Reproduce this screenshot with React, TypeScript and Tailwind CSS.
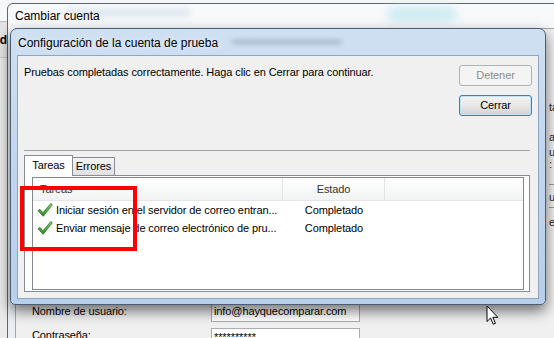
import React from "react";

function CheckIcon() {
  return (
    <svg width="16" height="16" viewBox="0 0 16 16" className="shrink-0">
      <defs>
        <linearGradient id="chk" x1="0" y1="0" x2="0" y2="1">
          <stop offset="0" stopColor="#86e060" />
          <stop offset="1" stopColor="#1f8a17" />
        </linearGradient>
      </defs>
      <path
        d="M1 8.8 L2.9 7.3 L6 10.7 L13.8 1.6 L15.3 2.8 L6.2 14.3 Z"
        fill="url(#chk)"
        stroke="#1b5e12"
        strokeWidth="0.7"
        strokeLinejoin="round"
      />
    </svg>
  );
}

function Cursor() {
  return (
    <svg width="13" height="21" viewBox="0 0 13 21">
      <path
        d="M1 1 V16.5 L4.6 13 L7.2 19.2 L9.4 18.3 L6.9 12.3 H11.8 Z"
        fill="#fff"
        stroke="#000"
        strokeWidth="1"
      />
    </svg>
  );
}

const tasks = [
  { name: "Iniciar sesión en el servidor de correo entran...", state: "Completado" },
  { name: "Enviar mensaje de correo electrónico de pru...", state: "Completado" },
];

export default function App() {
  return (
    <div className="relative h-[338px] w-[554px] overflow-hidden bg-[#f4f5f6] font-['Liberation_Sans',Arial,sans-serif] text-[11px] tracking-[-0.1px] text-black">
      {/* window behind, far left */}
      <div className="absolute left-0 top-0 flex h-full w-[7px] flex-col overflow-hidden">
        <div className="h-[22px] border-b border-[#b9bcc0] bg-[#f7f8f9]" />
        <div className="flex h-[36px] items-center justify-end border-b border-[#c8c8c8] bg-[#e4e4e4]">
          <span className="text-[12px] font-bold">d</span>
        </div>
        <div className="flex-1 bg-[#ebebeb]" />
      </div>

      {/* parent window: Cambiar cuenta */}
      <div className="absolute left-[7px] top-[3px] flex h-[360px] w-[580px] flex-col rounded-t-[6px] border border-[#5b6774] bg-gradient-to-b from-[#f7f9fb] to-[#eaeef2] pl-[7px]">
        <div className="relative flex h-[24px] items-center">
          <span className="relative z-10 text-[12px] tracking-normal">Cambiar cuenta</span>
          <div className="absolute left-[50px] top-[5px] h-[7px] w-[125px] rounded-full bg-[#9fb6cf] opacity-30 blur-[3px]" />
          <div className="absolute left-[372px] top-[3px] h-[15px] w-[70px] rounded-full bg-[#bfe6f0] opacity-70 blur-[4px]" />
        </div>
        <div className="flex flex-1 border-l border-t border-[#a7a7a7] bg-[#f0f0f0]">
          <div className="flex w-[532px] shrink-0 flex-col gap-[6px] pl-[16px] pt-[272px]">
            <div className="flex h-[21px] items-center">
              <span className="w-[179px]">Nombre de usuario:</span>
              <div className="flex h-[21px] w-[149px] items-center border border-[#abadb3] bg-white pl-[2px]">
                info@hayquecomparar.com
              </div>
            </div>
            <div className="flex h-[21px] items-start">
              <span className="w-[179px] leading-[14px]">Contraseña:</span>
              <div className="h-[21px] w-[149px] border border-[#abadb3] bg-white pl-[2px] pt-[2px] leading-[12px]">
                **********
              </div>
            </div>
          </div>
          <div className="flex flex-col whitespace-nowrap pl-[1px] pt-[72px] leading-[12px] text-[#222]">
            <span>ta</span>
            <span className="mt-[18px]">ac</span>
            <span className="mt-[3px]">u</span>
            <span>: n</span>
            <span className="mt-[14px] h-px w-[10px] bg-[#9a9a9a]" />
            <span className="mt-[6px]">u</span>
            <span className="mt-[4px] h-px w-[10px] bg-[#9a9a9a]" />
            <span className="mt-[8px]">e</span>
          </div>
        </div>
      </div>

      {/* dialog: Configuración de la cuenta de prueba */}
      <div className="absolute left-[10px] top-[28px] flex h-[277px] w-[536px] flex-col rounded-t-[7px] rounded-b-[5px] border border-[#4a5d73] bg-gradient-to-b from-[#cfe0f2] via-[#c0d6ed] to-[#b6cfea] px-[6px] pb-[5px] shadow-[0_6px_14px_rgba(0,0,0,0.55)]">
        <div className="relative flex h-[26px] items-center pl-[1px] pt-[1px]">
          <span className="relative z-10 text-[12px] tracking-normal text-shadow-[0_0_6px_rgba(255,255,255,0.9)]">
            Configuración de la cuenta de prueba
          </span>
          <div className="absolute left-[215px] top-[10px] h-[6px] w-[110px] rounded-full bg-[#5a6a7e] opacity-25 blur-[2px]" />
        </div>
        <div className="flex flex-1 flex-col border border-[#8fa6c0] bg-[#f0f0f0] px-[6px] pb-[6px] pt-[9px]">
          <div className="flex items-start justify-between">
            <p className="leading-[14px]">
              Pruebas completadas correctamente. Haga clic en Cerrar para continuar.
            </p>
            <div className="flex flex-col gap-[9px]">
              <button className="h-[21px] w-[73px] rounded-[3px] border border-[#adb2b5] bg-[#f4f4f4] text-[11px] text-[#8d8d8d]">
                Detener
              </button>
              <button className="h-[21px] w-[73px] rounded-[3px] border border-[#3c7fb1] bg-gradient-to-b from-[#f3f3f3] via-[#e8e8e8] to-[#d2d2d2] text-[11px] shadow-[inset_0_0_0_1px_#bfe3f8]">
                Cerrar
              </button>
            </div>
          </div>

          <div className="mr-[2px] mt-[34px] h-px bg-[#a3a3a3]" />

          <div className="mr-[2px] mt-[4px] flex flex-1 flex-col">
            <div className="flex h-[20px] items-end">
              <div className="relative z-10 -mb-px flex h-[21px] w-[49px] items-center justify-center border border-b-0 border-[#898c95] bg-white pb-[1px]">
                Tareas
              </div>
              <div className="-ml-px flex h-[18px] w-[43px] items-center justify-center border border-b-0 border-[#898c95] bg-gradient-to-b from-[#f3f3f3] to-[#e1e1e1]">
                Errores
              </div>
            </div>
            <div className="flex flex-1 border border-[#898c95] bg-white py-[1px] pl-[7px] pr-[5px]">
              <div className="flex flex-1 flex-col border border-[#828790] bg-white">
                <div className="flex h-[23px] border-b border-[#e5e5e5] bg-gradient-to-b from-white to-[#f2f3f4] text-[#333]">
                  <div className="flex w-[250px] items-center border-r border-[#e3e3e3] pl-[7px]">Tareas</div>
                  <div className="flex w-[102px] items-center justify-center border-r border-[#e3e3e3]">Estado</div>
                  <div className="flex-1" />
                </div>
                {tasks.map((t) => (
                  <div key={t.name} className="flex h-[18px] items-center">
                    <div className="flex w-[250px] items-center gap-[3px] whitespace-nowrap pl-[4px]">
                      <CheckIcon />
                      <span>{t.name}</span>
                    </div>
                    <div className="w-[102px] text-center">{t.state}</div>
                  </div>
                ))}
              </div>
            </div>
          </div>
        </div>
      </div>

      {/* red highlight drawn over the screenshot */}
      <div className="absolute left-[20px] top-[186px] h-[65px] w-[117px] border-4 border-[#ff0000]" />

      <div className="absolute left-[486px] top-[305px]">
        <Cursor />
      </div>
    </div>
  );
}
